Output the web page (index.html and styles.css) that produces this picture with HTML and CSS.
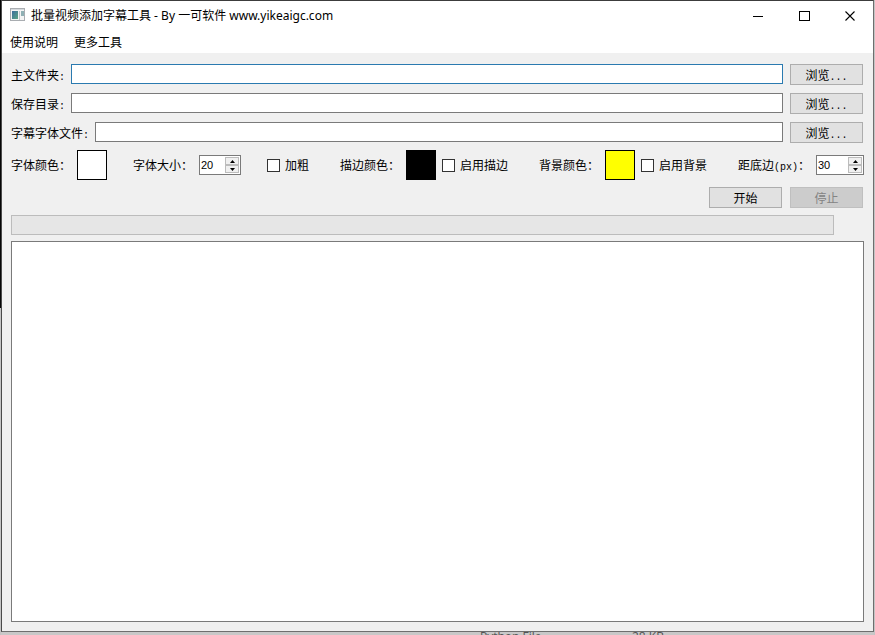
FILE: index.html
```html
<!DOCTYPE html>
<html lang="zh-CN">
<head>
<meta charset="utf-8">
<title>批量视频添加字幕工具</title>
<link rel="stylesheet" href="styles.css">
</head>
<body>
<main class="window">
  <header class="titlebar">
    <svg class="app-icon" width="16" height="16" viewBox="0 0 16 16" aria-hidden="true">
      <defs>
        <linearGradient id="pane" x1="0" y1="0" x2="1" y2="1">
          <stop offset="0" stop-color="#3c6d9c"/>
          <stop offset="1" stop-color="#5aa583"/>
        </linearGradient>
      </defs>
      <rect x="0.5" y="0.5" width="14" height="12" fill="#f4f4f4" stroke="#a9adb1"/>
      <rect x="1" y="1" width="13" height="1" fill="#d5d9dd"/>
      <rect x="2" y="3" width="6" height="8" fill="url(#pane)"/>
      <rect x="9" y="3" width="1" height="9" fill="#c3c7ca"/>
      <rect x="11" y="3" width="3" height="5" fill="#8fb0b4"/>
    </svg>
    <h1 class="title">批量视频添加字幕工具 - By 一可软件 www.yikeaigc.com</h1>
    <div class="window-controls">
      <button class="control" type="button" aria-label="最小化"><svg width="11" height="11" viewBox="0 0 11 11"><path d="M0 5.5h10" stroke="#000"/></svg></button>
      <button class="control" type="button" aria-label="最大化"><svg width="11" height="11" viewBox="0 0 11 11"><rect x="0.5" y="0.5" width="10" height="9" fill="none" stroke="#000"/></svg></button>
      <button class="control" type="button" aria-label="关闭"><svg width="11" height="11" viewBox="0 0 11 11"><path d="M0.5 0.5l9 9M9.5 0.5l-9 9" stroke="#000" stroke-width="1.1"/></svg></button>
    </div>
  </header>

  <nav class="menubar">
    <button class="menu-item" type="button">使用说明</button>
    <button class="menu-item" type="button">更多工具</button>
  </nav>

  <form class="content">
    <div class="file-row">
      <label class="label" for="folder">主文件夹<span class="latin">:</span></label>
      <input class="path active" id="folder" type="text">
      <button class="button" type="button">浏览<span class="latin">...</span></button>
    </div>
    <div class="file-row">
      <label class="label" for="output">保存目录<span class="latin">:</span></label>
      <input class="path" id="output" type="text">
      <button class="button" type="button">浏览<span class="latin">...</span></button>
    </div>
    <div class="file-row">
      <label class="label" for="font">字幕字体文件<span class="latin">:</span></label>
      <input class="path" id="font" type="text">
      <button class="button" type="button">浏览<span class="latin">...</span></button>
    </div>

    <div class="options">
      <div class="group">
        <span class="label" id="font-color">字体颜色：</span>
        <button class="swatch white" type="button" aria-labelledby="font-color"></button>
      </div>
      <div class="group">
        <label class="label" for="size">字体大小：</label>
        <span class="spin">
          <input class="number" id="size" type="number" value="20">
          <span class="steps">
            <button class="step" type="button" aria-label="增大"><svg width="5" height="3" viewBox="0 0 5 3"><path d="M0 3L2.5 0L5 3z"/></svg></button>
            <button class="step" type="button" aria-label="减小"><svg width="5" height="3" viewBox="0 0 5 3"><path d="M0 0L2.5 3L5 0z"/></svg></button>
          </span>
        </span>
      </div>
      <div class="group check-group">
        <input class="check" id="bold" type="checkbox">
        <label class="check-label" for="bold">加粗</label>
      </div>
      <div class="group check-group">
        <span class="label" id="stroke-color">描边颜色：</span>
        <button class="swatch black" type="button" aria-labelledby="stroke-color"></button>
        <input class="check" id="stroke" type="checkbox">
        <label class="check-label" for="stroke">启用描边</label>
      </div>
      <div class="group check-group">
        <span class="label" id="back-color">背景颜色：</span>
        <button class="swatch yellow" type="button" aria-labelledby="back-color"></button>
        <input class="check" id="back" type="checkbox">
        <label class="check-label" for="back">启用背景</label>
      </div>
      <div class="group">
        <label class="label" for="margin">距底边<span class="latin">(px)</span>：</label>
        <span class="spin wide">
          <input class="number" id="margin" type="number" value="30">
          <span class="steps">
            <button class="step" type="button" aria-label="增大"><svg width="5" height="3" viewBox="0 0 5 3"><path d="M0 3L2.5 0L5 3z"/></svg></button>
            <button class="step" type="button" aria-label="减小"><svg width="5" height="3" viewBox="0 0 5 3"><path d="M0 0L2.5 3L5 0z"/></svg></button>
          </span>
        </span>
      </div>
    </div>

    <div class="actions">
      <button class="button" type="button">开始</button>
      <button class="button" type="button" disabled>停止</button>
    </div>

    <div class="progress" role="progressbar" aria-label="进度"></div>
    <textarea class="log" aria-label="日志" readonly></textarea>
  </form>
</main>
<div class="desktop">
  <span>Python File</span>
  <span>28 KB</span>
</div>
</body>
</html>
```
FILE: styles.css
```css
* {
  box-sizing: border-box;
}

body {
  margin: 0;
  height: 100vh;
  display: flex;
  flex-direction: column;
  padding: 0 1px;
  overflow: hidden;
  background: linear-gradient(#050505 0 308px, #c4c4c4 308px) 0 0 / 1px 100% no-repeat #c4c4c4;
  color: #000;
  font: 12px/16px "Noto Sans CJK SC", sans-serif;
}

button,
input,
textarea {
  margin: 0;
  padding: 0;
  border: 0;
  border-radius: 0;
  outline: 0;
  background: none;
  color: inherit;
  font: inherit;
}

.window {
  flex: 1;
  min-height: 0;
  display: flex;
  flex-direction: column;
  border: 1px solid #6e6e6e;
  border-left-color: #4a4a4a;
  border-top-color: #3c3c3c;
  background: #f0f0f0;
}

.titlebar {
  display: flex;
  align-items: center;
  height: 30px;
  padding-left: 8px;
  background: #fff;
}

.title {
  flex: 1;
  margin: 0 0 0 5px;
  font: 12px/16px "Noto Sans", "Noto Sans CJK SC", sans-serif;
}

.window-controls {
  display: flex;
  align-self: stretch;
}

.control {
  display: grid;
  place-items: center;
  width: 46px;
}

.menubar {
  display: flex;
  gap: 16px;
  height: 22px;
  padding-left: 8px;
  background: #fff;
}

.content {
  flex: 1;
  min-height: 0;
  display: flex;
  flex-direction: column;
  padding: 11px 9px 9px;
}

.file-row {
  display: flex;
  margin-bottom: 8px;
}

.label {
  padding-right: 6px;
  white-space: nowrap;
}

.file-row .label {
  padding-top: 3px;
}

.latin {
  font: 10px/12px "Liberation Mono", monospace;
}

.path {
  flex: 1;
  min-width: 0;
  height: 20px;
  padding: 0 3px;
  border: 1px solid #7a7a7a;
  background: #fff;
}

.path.active {
  border-color: #2a7ab0;
}

.button {
  width: 73px;
  height: 21px;
  margin-left: 7px;
  border: 1px solid #adadad;
  background: #e1e1e1;
  line-height: 19px;
}

.button:disabled {
  border-color: #bfbfbf;
  background: #ccc;
  color: #838383;
}

.options {
  display: flex;
  justify-content: space-between;
  margin-top: -1px;
}

.group {
  display: flex;
  align-items: center;
}

.check-group {
  padding-right: 5px;
}

.swatch {
  width: 30px;
  height: 30px;
  border: 1px solid #000;
}

.swatch.white {
  background: #fff;
}

.swatch.black {
  background: #000;
}

.swatch.yellow {
  background: #ff0;
}

.check {
  appearance: none;
  width: 13px;
  height: 13px;
  margin-right: 5px;
  border: 1px solid #333;
  background: #fff;
}

.swatch + .check {
  margin-left: 6px;
}

.spin {
  display: flex;
  width: 42px;
  height: 20px;
  padding: 1px;
  border: 1px solid #7a7a7a;
  background: #fff;
}

.spin.wide {
  width: 48px;
}

.number {
  flex: 1;
  min-width: 0;
  appearance: textfield;
  font: 11px/16px "Liberation Sans", sans-serif;
}

.number::-webkit-inner-spin-button {
  display: none;
}

.steps {
  display: flex;
  flex-direction: column;
  width: 14px;
}

.step {
  flex: 1;
  display: grid;
  place-items: center;
  border: 1px solid #bcbcbc;
  background: #f0f0f0;
}

.actions {
  display: flex;
  justify-content: flex-end;
  margin: 7px 0;
}

.file-row .button,
.actions .button {
  margin-right: 1px;
}

.progress {
  height: 20px;
  margin-right: 30px;
  border: 1px solid #bcbcbc;
  background: #e6e6e6;
}

.log {
  flex: 1;
  min-height: 0;
  margin-top: 6px;
  border: 1px solid #7a7a7a;
  background: #fff;
  resize: none;
}

.desktop {
  display: grid;
  grid-template-columns: 152px 1fr;
  height: 3px;
  padding-left: 479px;
  overflow: hidden;
  background: #c8c8c8;
  color: #555;
  font: 12px/10px "Open Sans", sans-serif;
}
```
